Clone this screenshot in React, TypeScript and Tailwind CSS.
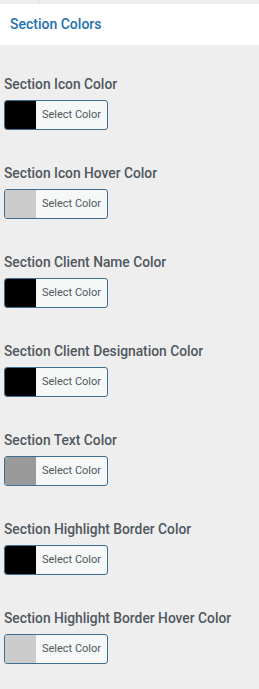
import React from 'react';

const FIELDS = [
  { label: 'Section Icon Color', color: '#000000' },
  { label: 'Section Icon Hover Color', color: '#cccccc' },
  { label: 'Section Client Name Color', color: '#000000' },
  { label: 'Section Client Designation Color', color: '#000000' },
  { label: 'Section Text Color', color: '#999999' },
  { label: 'Section Highlight Border Color', color: '#000000' },
  { label: 'Section Highlight Border Hover Color', color: '#cccccc' },
];

function ColorField({ label, color }: { label: string; color: string }) {
  return (
    <div className="flex flex-col">
      <label className="text-[13.8px] leading-[20px] font-medium text-[#50575e] whitespace-nowrap">{label}</label>
      <button className="mt-[6px] flex h-[30px] w-[104px] overflow-hidden rounded-[3px] border border-[#3f6e93] bg-[#f6f7f7]">
        <span className="h-full w-[31px] shrink-0" style={{ backgroundColor: color }} />
        <span className="flex-1 text-center text-[11px] leading-[28px] text-[#50575e]">Select Color</span>
      </button>
    </div>
  );
}

export default function App() {
  return (
    <div className="min-h-[689px] w-[259px] bg-[#eeeeee]" style={{ fontFamily: 'Roboto, "Liberation Sans", sans-serif' }}>
      <div className="flex h-[4px]">
        <div className="w-[39px] border-r border-[#dddddd]" />
      </div>
      <div className="flex h-[41px] items-center bg-white px-[10px]">
        <h3 className="text-[14px] font-medium text-[#2271b1]">Section Colors</h3>
      </div>
      <div className="flex flex-col gap-[33px] px-[4px] pt-[29px]">
        {FIELDS.map((f) => (
          <ColorField key={f.label} label={f.label} color={f.color} />
        ))}
      </div>
    </div>
  );
}
